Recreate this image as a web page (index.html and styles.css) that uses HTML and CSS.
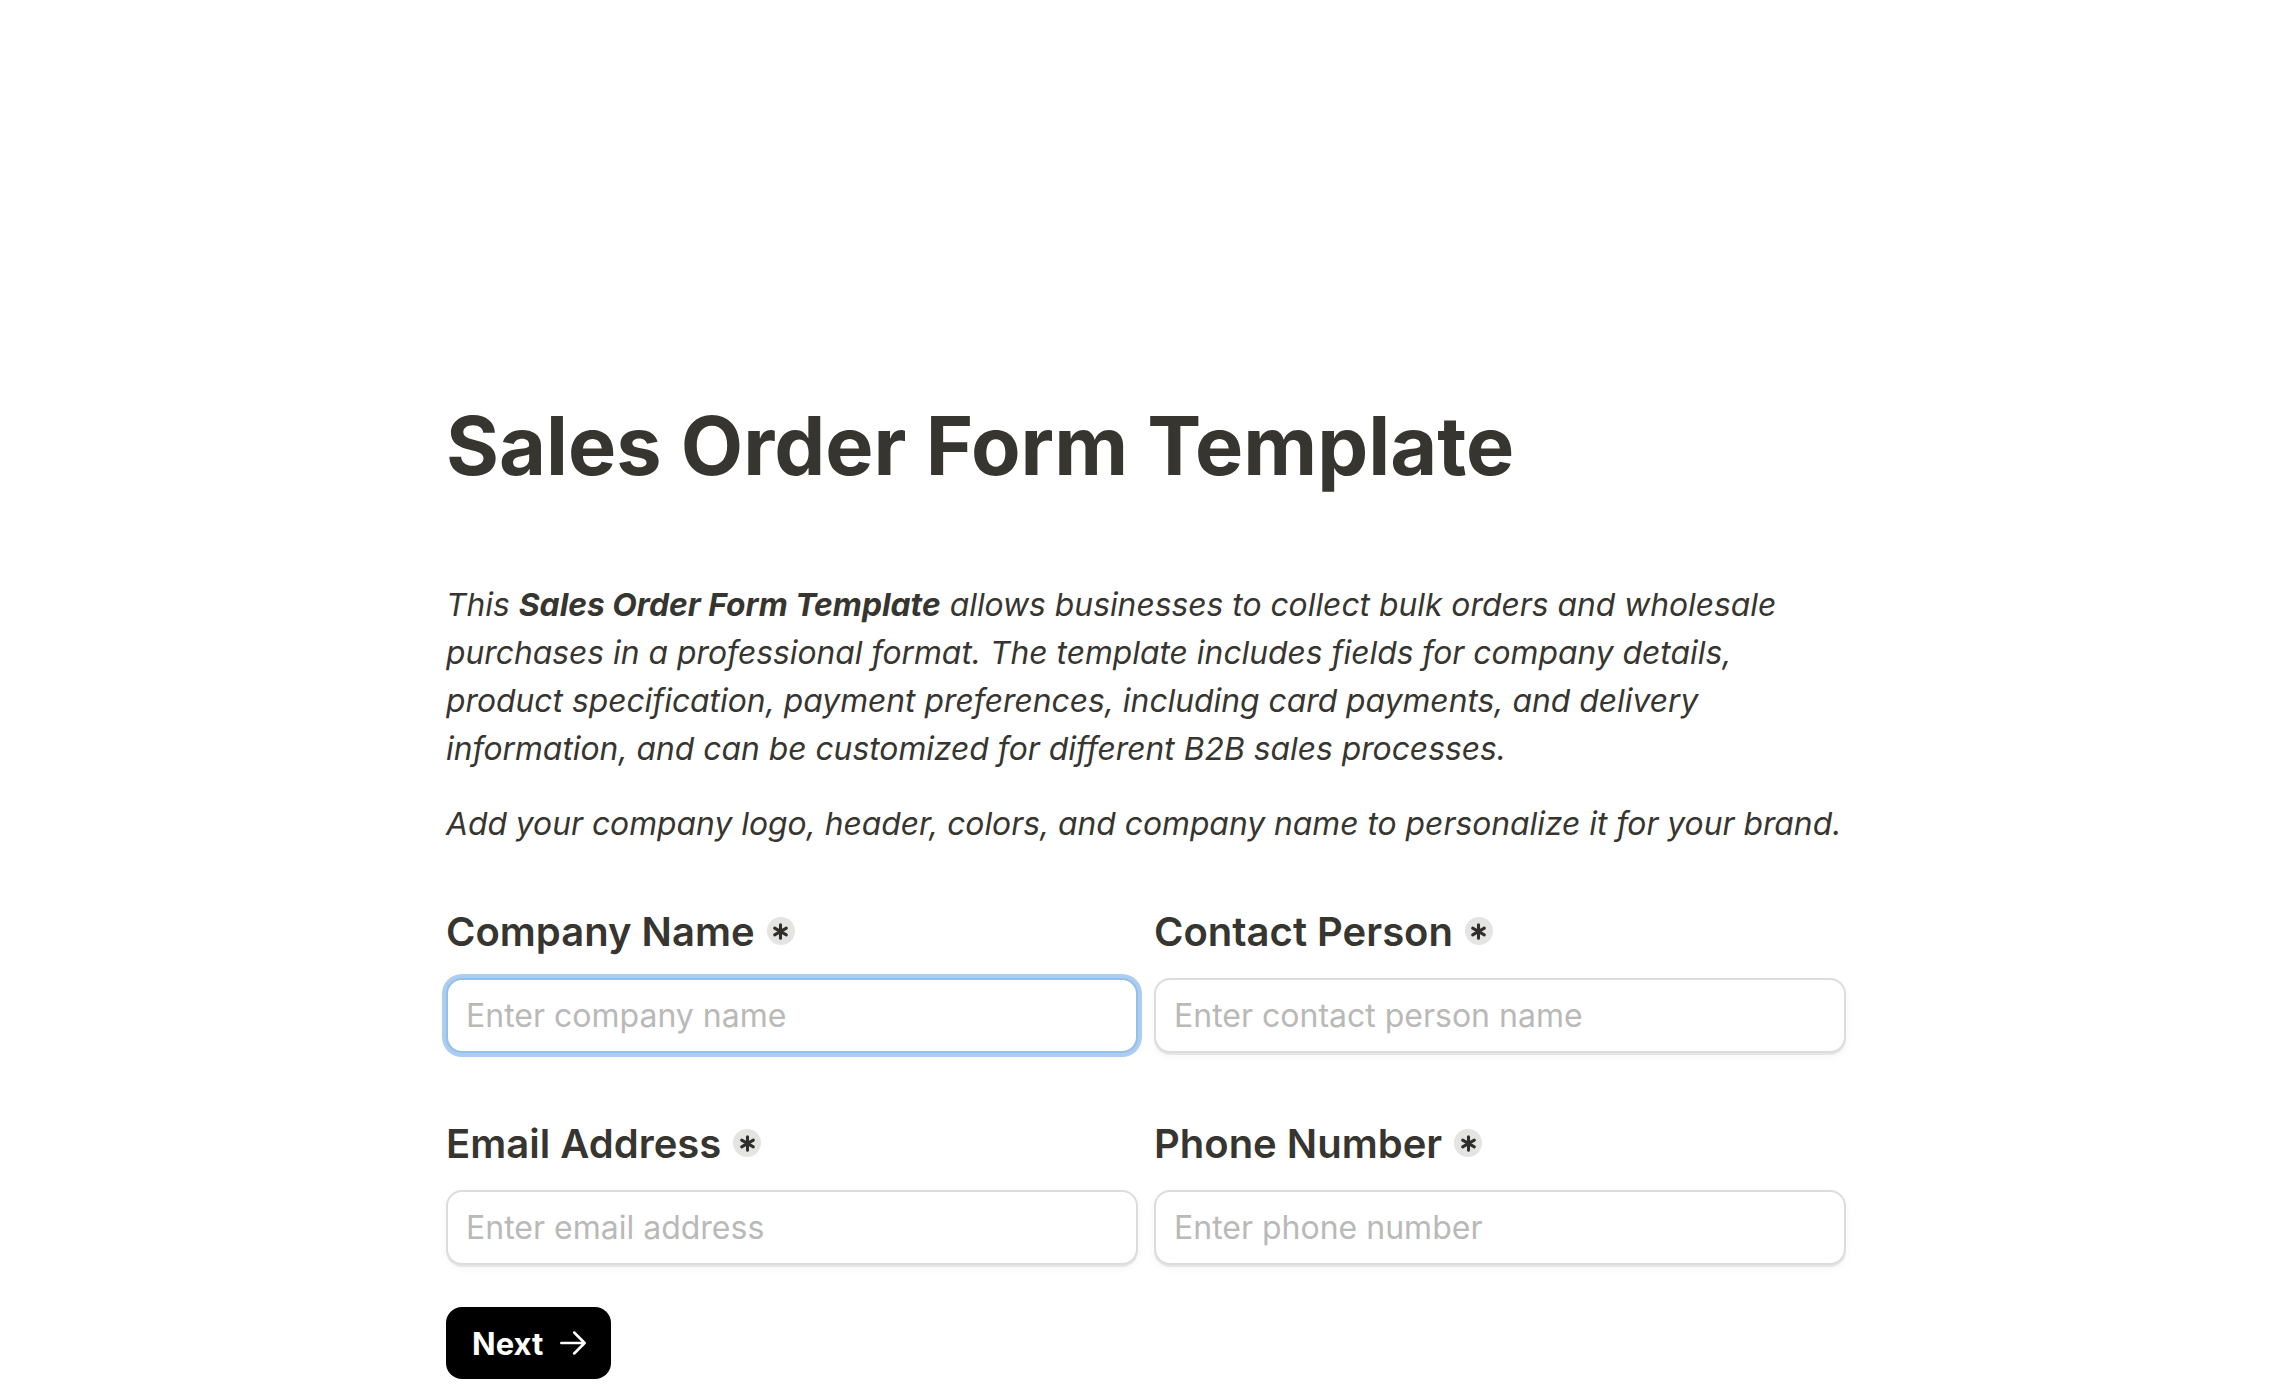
FILE: index.html
```html
<!DOCTYPE html>
<html lang="en">
  <head>
    <meta charset="utf8" />
    <meta name="viewport" content="width=device-width, initial-scale=1" />
    <title>Sales Order Form Template</title>
    <link rel="stylesheet" href="styles.css">
  </head>
  <body>
    <div class="form-page">
      <h1 class="form-title">Sales Order Form Template</h1>
      <div class="intro">
        <p>This <strong>Sales Order Form Template</strong> allows businesses to collect bulk orders and wholesale purchases in a professional format. The template includes fields for company details, product specification, payment preferences, including card payments, and delivery information, and can be customized for different B2B sales processes.</p>
        <p>Add your company logo, header, colors, and company name to personalize it for your brand.</p>
      </div>
      <form class="field-grid">
        <div class="field">
          <label class="field-label">
            <span>Company Name</span>
            <span class="required-mark"><svg viewBox="0 0 14 14"><path d="M7 1.5v11M2.2 4.25l9.6 5.5M2.2 9.75l9.6-5.5" /></svg></span>
          </label>
          <input class="text-input is-focused" type="text" placeholder="Enter company name" />
        </div>
        <div class="field">
          <label class="field-label">
            <span>Contact Person</span>
            <span class="required-mark"><svg viewBox="0 0 14 14"><path d="M7 1.5v11M2.2 4.25l9.6 5.5M2.2 9.75l9.6-5.5" /></svg></span>
          </label>
          <input class="text-input" type="text" placeholder="Enter contact person name" />
        </div>
        <div class="field">
          <label class="field-label">
            <span>Email Address</span>
            <span class="required-mark"><svg viewBox="0 0 14 14"><path d="M7 1.5v11M2.2 4.25l9.6 5.5M2.2 9.75l9.6-5.5" /></svg></span>
          </label>
          <input class="text-input" type="email" placeholder="Enter email address" />
        </div>
        <div class="field">
          <label class="field-label">
            <span>Phone Number</span>
            <span class="required-mark"><svg viewBox="0 0 14 14"><path d="M7 1.5v11M2.2 4.25l9.6 5.5M2.2 9.75l9.6-5.5" /></svg></span>
          </label>
          <input class="text-input" type="tel" placeholder="Enter phone number" />
        </div>
      </form>
      <button class="btn-next" type="button">
        <span>Next</span>
        <svg viewBox="0 0 24 24"><path d="M2 12h20M13 3l9 9-9 9" /></svg>
      </button>
    </div>
  </body>
</html>
```

FILE: styles.css
```css
/* Reset */
body, html {
  margin: 0;
  padding: 0;
  background: #fff;
  font-family: Inter, "Noto Sans", sans-serif;
  color: #37352f;
}
* {
  box-sizing: border-box;
}
.form-page {
  max-width: 1400px;
  margin: 0 auto;
  padding-top: 398px;
}
.form-title {
  margin: 0;
  font-size: 81px;
  line-height: 96px;
  font-weight: 700;
}
.intro {
  margin-top: 87px;
  font-size: 31.8px;
  line-height: 48px;
  font-style: italic;
}
.intro p {
  margin: 0 0 27px;
}
.intro p:last-child {
  margin-bottom: 0;
}
.intro strong {
  font-weight: 700;
}
.field-grid {
  display: grid;
  grid-template-columns: 1fr 1fr;
  column-gap: 16px;
  row-gap: 62px;
  margin-top: 55px;
}
.field-label {
  display: flex;
  align-items: center;
  gap: 12px;
  height: 56px;
  margin-bottom: 19px;
  font-size: 40px;
  font-weight: 600;
}
.required-mark {
  display: flex;
  align-items: center;
  justify-content: center;
  width: 28px;
  height: 28px;
  border-radius: 50%;
  background: #e4e4e3;
}
.required-mark svg {
  width: 17px;
  height: 17px;
  fill: none;
  stroke: #2f2e2a;
  stroke-width: 2.5;
  stroke-linecap: round;
}
.text-input {
  display: block;
  width: 100%;
  height: 75px;
  padding: 0 18px;
  border: 2px solid #dcdcdb;
  border-radius: 16px;
  background: #fff;
  font-family: inherit;
  font-size: 32px;
  color: #37352f;
  outline: none;
  box-shadow: 0 2px 0 rgba(0, 0, 0, 0.07), 0 4px 8px rgba(0, 0, 0, 0.04);
}
.text-input::placeholder {
  color: #b9b9b7;
}
.text-input.is-focused {
  border-color: #93bfe9;
  box-shadow: 0 0 0 4px #aacdf0;
}
.btn-next {
  display: flex;
  align-items: center;
  gap: 16px;
  height: 72px;
  margin-top: 42px;
  padding: 0 24px 0 26px;
  border: none;
  border-radius: 16px;
  background: #000;
  color: #fff;
  font-family: inherit;
  font-size: 31px;
  font-weight: 700;
  cursor: pointer;
}
.btn-next svg {
  width: 28px;
  height: 28px;
  fill: none;
  stroke: #fff;
  stroke-width: 2.2;
  stroke-linecap: round;
  stroke-linejoin: round;
}
```
